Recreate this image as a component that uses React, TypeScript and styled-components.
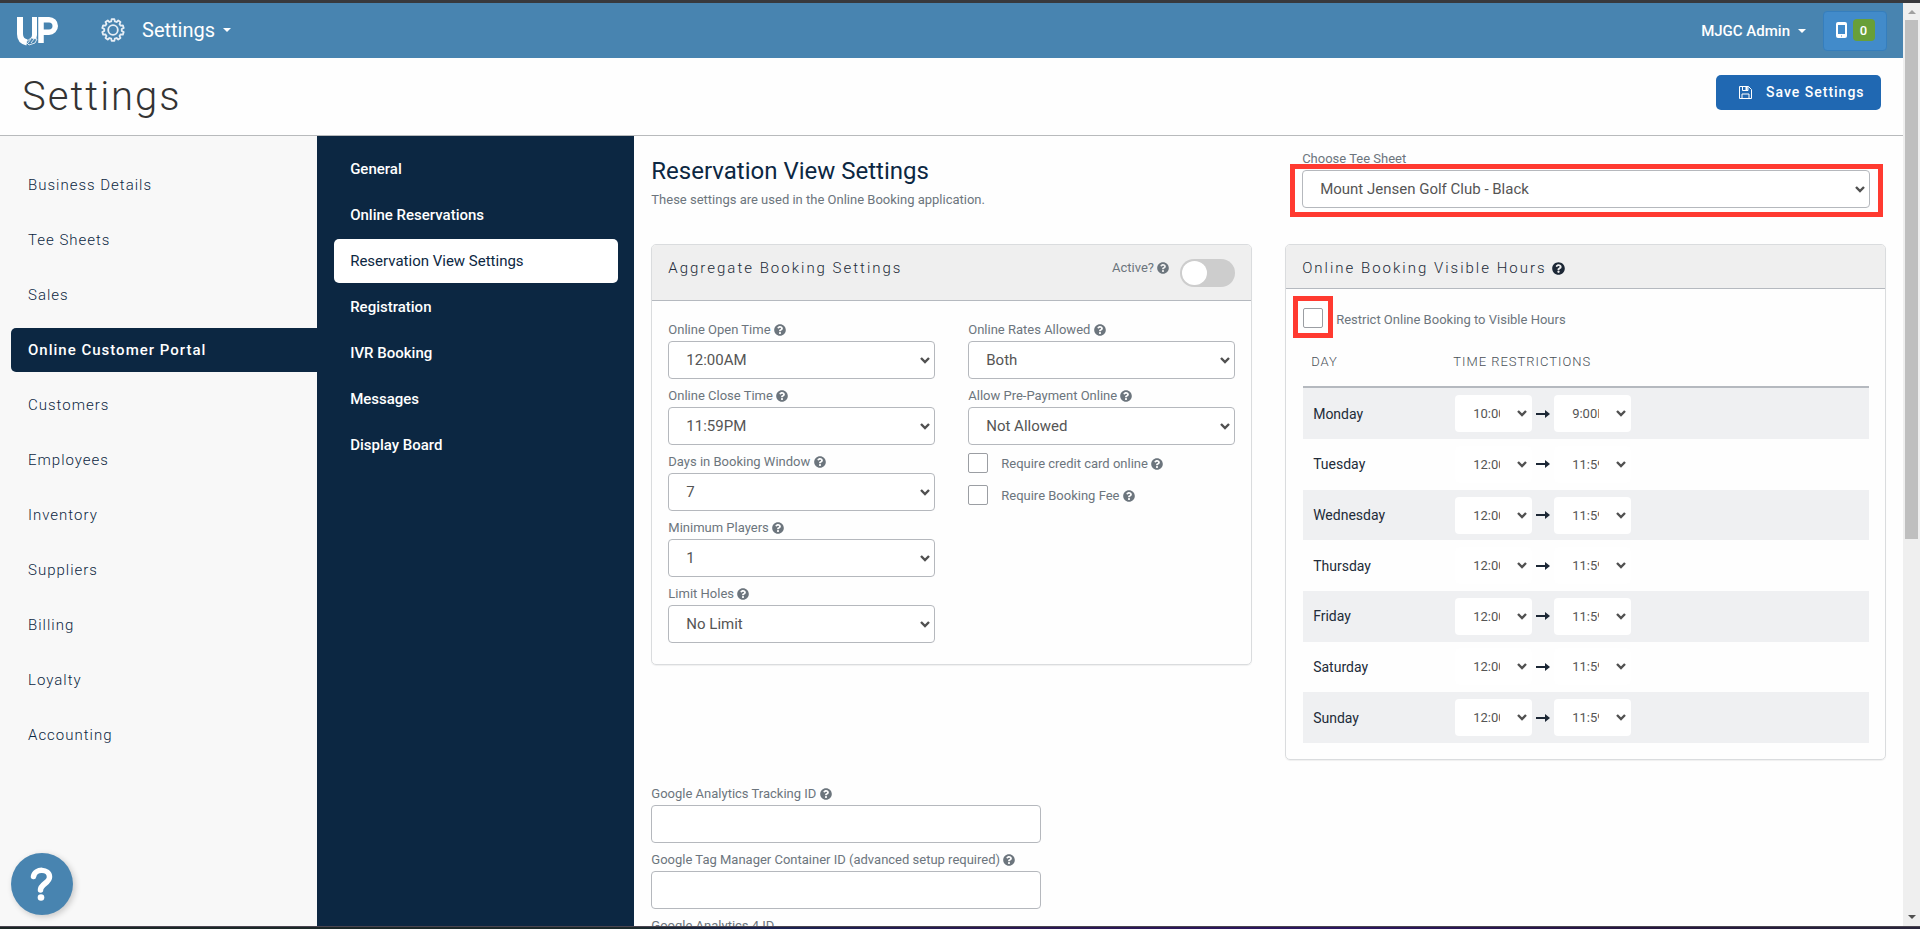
import React from "react";
import styled, { createGlobalStyle } from "styled-components";
import { FaQuestionCircle } from "react-icons/fa";

const Global = createGlobalStyle`
  *, *::before, *::after { box-sizing: border-box; }
  html, body { margin: 0; height: 100%; overflow: hidden; }
  #root { height: 100%; }
  body {
    font-family: Roboto, "Liberation Sans", sans-serif;
    font-size: 15px;
    color: #222b38;
    background: #fefefe;
  }
  button, input, select { font-family: inherit; }
`;

const Window = styled.div`
  height: 100vh;
  display: flex;
  flex-direction: column;
  border-top: 3px solid #38393d;
`;
const BottomEdge = styled.div`
  flex: none;
  height: 3px;
  border-top: 1px solid #4a4550;
  background: linear-gradient(90deg, #1c2626 0%, #1c2a2c 33%, #1a2250 40%, #2a1850 52%, #2c1660 70%, #261640 85%, #28253a 100%);
`;
const Viewport = styled.div`
  flex: 1;
  min-height: 0;
  display: flex;
`;
const Page = styled.div`
  flex: 1;
  min-width: 0;
  display: flex;
  flex-direction: column;
`;
const ScrollTrack = styled.div`
  flex: none;
  width: 17px;
  padding: 6px 2px;
  background: #efefef;
  display: flex;
  flex-direction: column;
  align-items: center;
  gap: 6px;
`;
const ScrollArrow = styled.svg`
  flex: none;
  width: 8px;
  height: 5px;
  display: block;
`;
const ScrollThumb = styled.div`
  flex: 0 0 57%;
  width: 100%;
  background: #bfbfbf;
`;
const ScrollSpace = styled.div`
  flex: 1;
`;

const TopBar = styled.header`
  flex: none;
  height: 55px;
  padding: 0 16px;
  display: flex;
  align-items: center;
  background: #4884b0;
  color: #fff;
`;
const Logo = styled.svg`
  width: 42px;
  height: 30px;
  display: block;
`;
const BarMenu = styled.button<{ $large?: boolean }>`
  display: flex;
  align-items: center;
  gap: 8px;
  padding: ${(p) => (p.$large ? "0 0 2px" : "0")};
  border: 0;
  background: none;
  color: inherit;
  font-weight: ${(p) => (p.$large ? 400 : 500)};
  font-size: ${(p) => (p.$large ? "20px" : "15px")};
  margin-left: ${(p) => (p.$large ? "43px" : "auto")};
`;
const Gear = styled.svg`
  width: 24px;
  height: 24px;
  margin-right: 9px;
`;
const Caret = styled.span`
  border: 4px solid transparent;
  border-top-color: #fff;
  border-bottom: 0;
`;
const DeviceButton = styled.button`
  height: 40px;
  width: 64px;
  margin-left: 17px;
  padding: 0 0 2px;
  display: flex;
  align-items: center;
  justify-content: center;
  gap: 6px;
  border: 1px solid #357ebd;
  border-radius: 4px;
  background: #428bca;
  color: #fff;
`;
const Count = styled.span`
  width: 22px;
  height: 22px;
  border-radius: 4px;
  background: #689f38;
  font-size: 13px;
  font-weight: 500;
  line-height: 23px;
  text-align: center;
`;

const TitleBar = styled.div`
  flex: none;
  height: 78px;
  padding: 0 22px;
  display: flex;
  align-items: flex-start;
  justify-content: space-between;
  border-bottom: 1px solid #b8babc;
`;
const Title = styled.h1`
  margin: 15px 0 0;
  font-size: 40px;
  line-height: 48px;
  font-weight: 300;
  letter-spacing: 2px;
  color: #333;
`;
const SaveButton = styled.button`
  height: 35px;
  width: 165px;
  margin-top: 17px;
  padding: 0 0 1px 23px;
  display: flex;
  align-items: center;
  gap: 14px;
  border: 0;
  border-radius: 5px;
  background: #2068b2;
  color: #fff;
  font-size: 14px;
  font-weight: 500;
  letter-spacing: 1px;
`;

const Body = styled.div`
  flex: 1;
  min-height: 0;
  display: grid;
  grid-template-columns: 1fr 1fr 4fr;
`;
const SideNav = styled.nav`
  padding: 27px 0 0 11px;
  background: #f8f8f8;
  display: flex;
  flex-direction: column;
  gap: 11px;
`;
const SideLink = styled.a<{ $active?: boolean }>`
  height: 44px;
  padding-left: 17px;
  line-height: 44px;
  border-radius: 5px 0 0 5px;
  text-decoration: none;
  letter-spacing: 1px;
  font-weight: ${(p) => (p.$active ? 500 : 300)};
  color: ${(p) => (p.$active ? "#fff" : "#0c2742")};
  background: ${(p) => (p.$active ? "#0c2742" : "transparent")};
`;
const SubNav = styled.nav`
  padding: 11px 16px 11px 17px;
  background: #0c2742;
  display: flex;
  flex-direction: column;
  gap: 2px;
`;
const SubLink = styled.a<{ $active?: boolean }>`
  height: 44px;
  padding-left: 16px;
  line-height: 44px;
  border-radius: 5px;
  text-decoration: none;
  font-weight: ${(p) => (p.$active ? 400 : 500)};
  color: ${(p) => (p.$active ? "#0c2742" : "#fff")};
  background: ${(p) => (p.$active ? "#fff" : "transparent")};
`;

const Main = styled.main`
  min-width: 0;
  overflow: hidden;
  padding: 0 17px;
`;
const Columns = styled.div`
  display: grid;
  grid-template-columns: 1fr 1fr;
  column-gap: 33px;
  align-items: start;
`;
const Intro = styled.div`
  height: 108px;
  padding-top: 20px;
`;
const Heading = styled.h2`
  margin: 0;
  font-size: 24px;
  line-height: 30px;
  font-weight: 400;
  color: #0c2742;
`;
const Note = styled.p`
  margin: 4px 0 0;
  font-size: 13px;
  line-height: 20px;
  color: #6c757d;
`;
const TeeSheet = styled.div`
  position: relative;
  height: 108px;
  padding: 14px 16px 0 17px;
`;
const TeeSheetMarker = styled.div`
  position: absolute;
  inset: 28px 3px 27px 5px;
  border: 5px solid #ff3a30;
  pointer-events: none;
`;
const RestrictMarker = styled.div`
  position: absolute;
  top: -12px;
  left: -10px;
  width: 40px;
  height: 42px;
  border: 5px solid #ff3a30;
  pointer-events: none;
`;
const Label = styled.label`
  display: block;
  margin-bottom: 2px;
  font-size: 13px;
  line-height: 18px;
  color: #6c757d;
`;
const chevron = `url("data:image/svg+xml,%3Csvg xmlns='http://www.w3.org/2000/svg' width='10' height='7' viewBox='0 0 10 7'%3E%3Cpath d='M1 1l4 4 4-4' fill='none' stroke='%23505050' stroke-width='2.4'/%3E%3C/svg%3E")`;
const Select = styled.select<{ $small?: boolean }>`
  appearance: none;
  display: block;
  width: ${(p) => (p.$small ? "77px" : "100%")};
  height: ${(p) => (p.$small ? "37px" : "38px")};
  padding: 0 31px 0 17px;
  border: 1px solid ${(p) => (p.$small ? "transparent" : "#b5b8bd")};
  border-radius: 4px;
  background: #fff ${chevron} no-repeat right 4px center;
  color: #555;
  font-size: ${(p) => (p.$small ? "13px" : "15px")};
`;
const Field = styled.div`
  padding-bottom: 8px;
`;
const TextInput = styled.input`
  display: block;
  width: 390px;
  max-width: 100%;
  height: 38px;
  border: 1px solid #b5b8bd;
  border-radius: 4px;
  background: #fff;
`;
const Card = styled.section`
  border: 1px solid #dadcde;
  border-radius: 5px;
  box-shadow: 0 1px 1px rgba(0, 0, 0, 0.06);
`;
const CardHeader = styled.div<{ $tall?: boolean }>`
  height: ${(p) => (p.$tall ? "56px" : "44px")};
  padding: 14px 16px 0;
  display: flex;
  align-items: flex-start;
  border-bottom: 1px solid #b5b9bf;
  border-radius: 4px 4px 0 0;
  background: #efefef;
`;
const CardTitle = styled.h3`
  margin: 0;
  font-size: 15px;
  line-height: 18px;
  font-weight: 300;
  letter-spacing: 2px;
  color: #222b38;
`;
const Toggle = styled.div`
  margin-left: auto;
  display: flex;
  gap: 11px;
  align-items: flex-start;
`;
const Switch = styled.input`
  appearance: none;
  width: 55px;
  height: 28px;
  margin: 0;
  border-radius: 14px;
  background: #cdcdcd;
  &::before {
    content: "";
    display: block;
    width: 25px;
    height: 24px;
    margin: 2px;
    border-radius: 50%;
    background: #fff;
  }
`;
const CardFields = styled.div`
  padding: 20px 16px 13px;
  display: grid;
  grid-template-columns: 1fr 1fr;
  column-gap: 33px;
`;
const Check = styled.input`
  appearance: none;
  flex: none;
  width: 20px;
  height: 20px;
  margin: 0;
  border: 1px solid #9b9ea3;
  border-radius: 2px;
  background: #fff;
`;
const CheckRow = styled.div`
  height: 32px;
  display: flex;
  align-items: flex-start;
  gap: 13px;
  & > label { padding-top: 2px; }
`;
const HoursBody = styled.div`
  padding: 19px 16px 16px 17px;
`;
const RestrictRow = styled(CheckRow)`
  position: relative;
  height: 36px;
  & > label { padding-top: 3px; }
`;
const Table = styled.table`
  width: 100%;
  height: 399px;
  border-collapse: collapse;
  table-layout: fixed;
`;
const HeadCell = styled.th<{ $first?: boolean }>`
  width: ${(p) => (p.$first ? "142px" : "auto")};
  height: 43px;
  padding: 0 8px 8px;
  text-align: left;
  text-transform: uppercase;
  font-size: 13px;
  font-weight: 300;
  letter-spacing: 1px;
  color: #495057;
  border-bottom: 2px solid #b5b9bf;
`;
const DayRow = styled.tr`
  &:nth-child(odd) { background: #eff0f2; }
`;
const DayCell = styled.th`
  padding: 0 10px;
  text-align: left;
  font-size: 14px;
  font-weight: 400;
`;
const TimeCell = styled.td`
  padding: 0 10px;
`;
const Times = styled.div`
  display: flex;
  align-items: center;
  gap: 4px;
`;
const Arrow = styled.svg`
  width: 14px;
  height: 8px;
`;
const Analytics = styled.div`
  margin-top: 25px;
`;
const HelpButton = styled.button`
  position: fixed;
  left: 11px;
  bottom: 14px;
  width: 62px;
  height: 62px;
  padding: 0;
  border: 0;
  border-radius: 50%;
  background: #4884b0;
  box-shadow: 2px 2px 6px rgba(0, 0, 0, 0.2);
  display: grid;
  place-items: center;
`;
const Help = styled(FaQuestionCircle)<{ $dark?: boolean }>`
  width: ${(p) => (p.$dark ? "13px" : "12px")};
  height: ${(p) => (p.$dark ? "13px" : "12px")};
  color: ${(p) => (p.$dark ? "#1c2735" : "#6c757d")};
  vertical-align: -2px;
`;

const gearPath = (() => {
  const pts: string[] = [];
  const teeth = 10;
  for (let i = 0; i < teeth; i++) {
    const at = (f: number, r: number) => {
      const a = ((i + f) / teeth) * Math.PI * 2 - Math.PI / 2;
      return `${(12 + r * Math.cos(a)).toFixed(2)} ${(12 + r * Math.sin(a)).toFixed(2)}`;
    };
    pts.push(at(-0.2, 10.9), at(0.2, 10.9), at(0.32, 8.8), at(0.68, 8.8));
  }
  return `M${pts.join("L")}Z`;
})();

const sections = ["Business Details", "Tee Sheets", "Sales", "Online Customer Portal", "Customers", "Employees", "Inventory", "Suppliers", "Billing", "Loyalty", "Accounting"];
const portalPages = ["General", "Online Reservations", "Reservation View Settings", "Registration", "IVR Booking", "Messages", "Display Board"];
const bookingFields = [
  ["Online Open Time", "12:00AM"],
  ["Online Close Time", "11:59PM"],
  ["Days in Booking Window", "7"],
  ["Minimum Players", "1"],
  ["Limit Holes", "No Limit"],
];
const rateFields = [
  ["Online Rates Allowed", "Both"],
  ["Allow Pre-Payment Online", "Not Allowed"],
];
const days = ["Monday", "Tuesday", "Wednesday", "Thursday", "Friday", "Saturday", "Sunday"];

const slug = (s: string) => s.toLowerCase().replace(/[^a-z0-9]+/g, "-");

function SelectField({ label, value }: { label: string; value: string }) {
  return (
    <Field>
      <Label htmlFor={slug(label)}>{label} <Help /></Label>
      <Select id={slug(label)}><option>{value}</option></Select>
    </Field>
  );
}

function CheckField({ label }: { label: string }) {
  return (
    <CheckRow>
      <Check type="checkbox" id={slug(label)} />
      <Label htmlFor={slug(label)}>{label} <Help /></Label>
    </CheckRow>
  );
}

export default function App() {
  return (
    <>
      <Global />
      <Window>
        <Viewport>
          <Page>
            <TopBar>
              <Logo viewBox="0 0 42 30" fill="none" aria-label="UP">
                <path d="M4 1v17q0 7 7 8.500" stroke="#fff" strokeWidth="6" />
                <path d="M18.500 1v18q0 3-2 5" stroke="#fff" strokeWidth="5" />
                <path d="M25 27V3.700h8a6 6 0 0 1 0 12.500h-8" stroke="#fff" strokeWidth="5.500" />
                <path d="M10 26l5-4 6 1-2 4-6 2z" fill="#4884b0" stroke="#fff" strokeWidth="0.800" />
                <path d="M12 27l3-4M15 27l3-4" stroke="#fff" strokeWidth="0.800" />
              </Logo>
              <BarMenu $large>
                <Gear viewBox="0 0 24 24" fill="none" stroke="#e6eef5" strokeWidth="1.800" strokeLinejoin="round">
                  <path d={gearPath} />
                  <circle cx="12" cy="12" r="4.800" />
                </Gear>
                Settings <Caret />
              </BarMenu>
              <BarMenu>MJGC Admin <Caret /></BarMenu>
              <DeviceButton aria-label="Devices">
                <svg width="11" height="16" viewBox="0 0 11 16">
                  <path fillRule="evenodd" fill="#fff" d="M2 0h7a2 2 0 0 1 2 2v12a2 2 0 0 1-2 2H2a2 2 0 0 1-2-2V2a2 2 0 0 1 2-2zM2 3v9h7V3zM5 13.500v1h1v-1z" />
                </svg>
                <Count>0</Count>
              </DeviceButton>
            </TopBar>
            <TitleBar>
              <Title>Settings</Title>
              <SaveButton>
                <svg width="13" height="13" viewBox="0 0 13 13" fill="none" stroke="#fff">
                  <path d="M.5.5h9l3 3v9H.5z M3 12.500V8h7v4.500 M3.500.5v4h5.500v-4" />
                  <path d="M7.500 1v3" strokeWidth="2" />
                </svg>
                Save Settings
              </SaveButton>
            </TitleBar>
            <Body>
              <SideNav>
                {sections.map((s) => (
                  <SideLink key={s} href="#" $active={s === "Online Customer Portal"}>{s}</SideLink>
                ))}
              </SideNav>
              <SubNav>
                {portalPages.map((s) => (
                  <SubLink key={s} href="#" $active={s === "Reservation View Settings"}>{s}</SubLink>
                ))}
              </SubNav>
              <Main>
                <Columns>
                  <Intro>
                    <Heading>Reservation View Settings</Heading>
                    <Note>These settings are used in the Online Booking application.</Note>
                  </Intro>
                  <TeeSheet>
                    <Label htmlFor="tee-sheet">Choose Tee Sheet</Label>
                    <Select id="tee-sheet"><option>Mount Jensen Golf Club - Black</option></Select>
                    <TeeSheetMarker />
                  </TeeSheet>
                  <Card>
                    <CardHeader $tall>
                      <CardTitle>Aggregate Booking Settings</CardTitle>
                      <Toggle>
                        <Label htmlFor="active">Active? <Help /></Label>
                        <Switch type="checkbox" role="switch" id="active" />
                      </Toggle>
                    </CardHeader>
                    <CardFields>
                      <div>
                        {bookingFields.map(([l, v]) => <SelectField key={l} label={l} value={v} />)}
                      </div>
                      <div>
                        {rateFields.map(([l, v]) => <SelectField key={l} label={l} value={v} />)}
                        <CheckField label="Require credit card online" />
                        <CheckField label="Require Booking Fee" />
                      </div>
                    </CardFields>
                  </Card>
                  <Card>
                    <CardHeader>
                      <CardTitle>Online Booking Visible Hours <Help $dark /></CardTitle>
                    </CardHeader>
                    <HoursBody>
                      <RestrictRow>
                        <Check type="checkbox" id="restrict" />
                        <Label htmlFor="restrict">Restrict Online Booking to Visible Hours</Label>
                        <RestrictMarker />
                      </RestrictRow>
                      <Table>
                        <thead>
                          <tr><HeadCell $first>Day</HeadCell><HeadCell>Time Restrictions</HeadCell></tr>
                        </thead>
                        <tbody>
                          {days.map((d, i) => (
                            <DayRow key={d}>
                              <DayCell scope="row">{d}</DayCell>
                              <TimeCell>
                                <Times>
                                  <Select $small aria-label={`${d} from`}><option>{i ? "12:00AM" : "10:00AM"}</option></Select>
                                  <Arrow viewBox="0 0 14 8"><path d="M0 3h9V0l5 4-5 4V5H0z" fill="#1c2735" /></Arrow>
                                  <Select $small aria-label={`${d} to`}><option>{i ? "11:59PM" : "9:00PM"}</option></Select>
                                </Times>
                              </TimeCell>
                            </DayRow>
                          ))}
                        </tbody>
                      </Table>
                    </HoursBody>
                  </Card>
                </Columns>
                <Analytics>
                  <Field>
                    <Label htmlFor="ga">Google Analytics Tracking ID <Help /></Label>
                    <TextInput id="ga" />
                  </Field>
                  <Field>
                    <Label htmlFor="gtm">Google Tag Manager Container ID (advanced setup required) <Help /></Label>
                    <TextInput id="gtm" />
                  </Field>
                  <Field>
                    <Label htmlFor="ga4">Google Analytics 4 ID</Label>
                    <TextInput id="ga4" />
                  </Field>
                </Analytics>
              </Main>
            </Body>
          </Page>
          <ScrollTrack>
            <ScrollArrow viewBox="0 0 8 5"><path d="M0 5l4-4 4 4z" fill="#a0a0a0" /></ScrollArrow>
            <ScrollThumb />
            <ScrollSpace />
            <ScrollArrow viewBox="0 0 8 5"><path d="M0 0l4 4 4-4z" fill="#505050" /></ScrollArrow>
          </ScrollTrack>
        </Viewport>
        <BottomEdge />
      </Window>
      <HelpButton aria-label="Help">
        <svg width="24" height="34" viewBox="0 0 24 34" fill="none">
          <path d="M3.500 9.500C5 1 19.500 1.500 19.500 10c0 6-9 7-9 13" stroke="#fff" strokeWidth="5.500" strokeLinecap="round" />
          <circle cx="11" cy="30.500" r="3.300" fill="#fff" />
        </svg>
      </HelpButton>
    </>
  );
}
